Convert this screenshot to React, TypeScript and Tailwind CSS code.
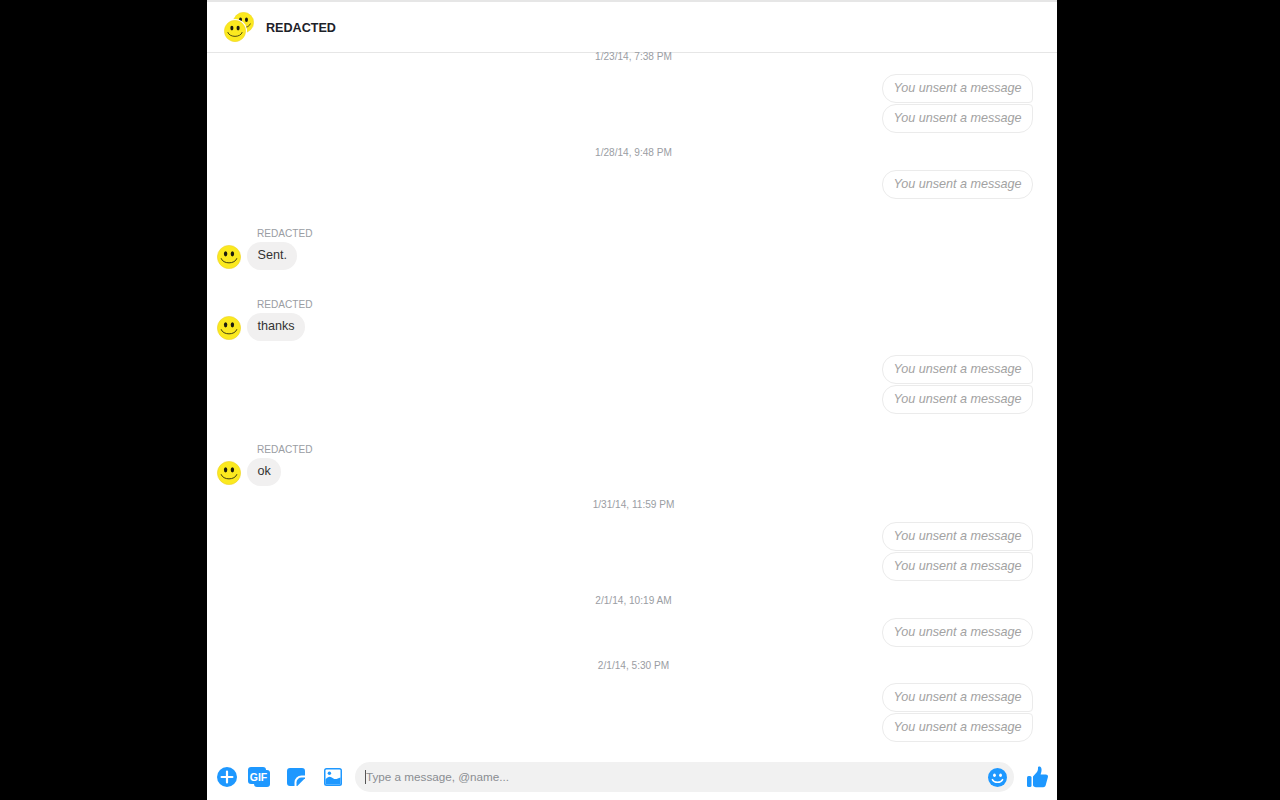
import React from 'react';

const Smiley = ({ className = '' }: { className?: string }) => (
  <svg viewBox="0 0 24 24" className={className}>
    <circle cx="12" cy="12" r="11.6" fill="#fbe91f" stroke="#ecd22a" strokeWidth="0.6" />
    <ellipse cx="8.6" cy="8.8" rx="1.7" ry="2.6" fill="#1c1c10" />
    <ellipse cx="15.4" cy="8.8" rx="1.7" ry="2.6" fill="#1c1c10" />
    <path d="M4.2 13.6 C6 19.4 18 19.4 19.8 13.6" fill="none" stroke="#2a2a10" strokeWidth="0.9" strokeLinecap="round" />
  </svg>
);

const Stamp = ({ text, className = '' }: { text: string; className?: string }) => (
  <div className={`h-[12px] pl-[3px] text-center text-[10.1px] leading-[14px] text-[#9a9da3] ${className}`}>{text}</div>
);

const Unsent = ({ className = '' }: { className?: string }) => (
  <div className={`flex justify-end pr-[24px] ${className}`}>
    <div className="h-[29px] w-[151px] rounded-[14px] border border-[#ebebeb] text-center text-[12.6px] italic leading-[27px] text-[#a2a2a2]">
      You unsent a message
    </div>
  </div>
);

const UnsentPair = ({ className = '' }: { className?: string }) => (
  <div className={`flex flex-col gap-px pr-[24px] items-end ${className}`}>
    <div className="h-[29px] w-[151px] rounded-[14px] rounded-br-[4px] border border-[#ebebeb] text-center text-[12.6px] italic leading-[27px] text-[#a2a2a2]">
      You unsent a message
    </div>
    <div className="h-[29px] w-[151px] rounded-[14px] rounded-tr-[4px] border border-[#ebebeb] text-center text-[12.6px] italic leading-[27px] text-[#a2a2a2]">
      You unsent a message
    </div>
  </div>
);

const Incoming = ({ text, className = '' }: { text: string; className?: string }) => (
  <div className={`pl-[10px] ${className}`}>
    <div className="ml-[40px] h-[12px] text-[10.1px] leading-[13px] text-[#9a9da3]">REDACTED</div>
    <div className="mt-[3px] flex items-end gap-[6px]">
      <Smiley className="mb-px h-[24px] w-[24px]" />
      <div className="h-[28px] rounded-[14px] bg-[#f1f0f0] pl-[10.5px] pr-[10px] text-[12.6px] leading-[27px] text-[#333333]">{text}</div>
    </div>
  </div>
);

export default function App() {
  return (
    <div className="flex h-screen justify-start overflow-hidden bg-black pl-[207px] font-['Liberation_Sans',Arial,sans-serif]">
      <div className="flex h-full w-[850px] flex-col bg-white">
        {/* Header */}
        <div className="flex h-[53px] shrink-0 items-center border-t-2 border-b border-t-[#e6e6e6] border-b-[#e6e6e6] pl-[17px]">
          <div className="relative h-[34px] w-[30px]">
            <Smiley className="absolute left-[9px] top-[2px] h-[21px] w-[21px]" />
            <div className="absolute -left-px top-[9px] rounded-full bg-white p-px">
              <Smiley className="h-[22px] w-[22px]" />
            </div>
          </div>
          <span className="ml-[12px] pt-[2px] text-[12.6px] font-bold text-[#1d2129]">REDACTED</span>
        </div>

        {/* Messages */}
        <div className="-mt-[3px] min-h-0 flex-1 overflow-hidden">
          <Stamp text="1/23/14, 7:38 PM" />
          <UnsentPair className="mt-[12px]" />
          <Stamp text="1/28/14, 9:48 PM" className="mt-[13px]" />
          <Unsent className="mt-[12px]" />
          <Incoming text="Sent." className="mt-[28px]" />
          <Incoming text="thanks" className="mt-[28px]" />
          <UnsentPair className="mt-[14px]" />
          <Incoming text="ok" className="mt-[29px]" />
          <Stamp text="1/31/14, 11:59 PM" className="mt-[12px]" />
          <UnsentPair className="mt-[12px]" />
          <Stamp text="2/1/14, 10:19 AM" className="mt-[13px]" />
          <Unsent className="mt-[12px]" />
          <Stamp text="2/1/14, 5:30 PM" className="mt-[12px]" />
          <UnsentPair className="mt-[12px]" />
        </div>

        {/* Composer */}
        <div className="flex h-[48px] shrink-0 items-start pl-[10px] pt-[10px]">
          <div className="flex h-[30px] items-center">
            <svg viewBox="0 0 20 20" className="h-[20px] w-[20px]">
              <circle cx="10" cy="10" r="10" fill="#1e98ff" />
              <path d="M10 4.6v10.8M4.6 10h10.8" stroke="#fff" strokeWidth="2.2" strokeLinecap="round" />
            </svg>
            <svg viewBox="0 0 22 20" className="ml-[11px] h-[20px] w-[22px]">
              <rect x="0" y="0" width="18" height="17" rx="3" fill="#1e98ff" />
              <rect x="6" y="3" width="16" height="17" rx="3" fill="#1e98ff" />
              <text x="10.5" y="14" textAnchor="middle" fontSize="10.5" fontWeight="700" fill="#fff" fontFamily="Liberation Sans, sans-serif">GIF</text>
            </svg>
            <svg viewBox="0 0 18 18" className="ml-[17px] h-[18px] w-[18px]">
              <path d="M3 0h12a3 3 0 0 1 3 3v4.5h-3.5a7 7 0 0 0-7 7V18H3a3 3 0 0 1-3-3V3a3 3 0 0 1 3-3z" fill="#1e98ff" />
              <path d="M18 9.5v.8L10.3 18H9.5v-3.5a5 5 0 0 1 5-5z" fill="#1e98ff" />
            </svg>
            <svg viewBox="0 0 18 18" className="ml-[19px] h-[18px] w-[18px]">
              <rect x="0" y="0" width="18" height="18" rx="2.5" fill="#1e98ff" />
              <rect x="1.5" y="1.5" width="15" height="15" rx="1" fill="#fff" />
              <circle cx="5.4" cy="5.2" r="1.7" fill="#1e98ff" />
              <path d="M1.5 11.5 C4 8 6.5 8 9 10.2 C11.5 12 13.5 10.5 16.5 9.5 V16.5 H1.5z" fill="#1e98ff" />
            </svg>
          </div>
          <div className="ml-[13px] flex h-[30px] flex-1 items-center rounded-[15px] bg-[#f1f1f1] pl-[10px] pr-[7px]">
            <span className="h-[14px] w-px bg-[#555555]" />
            <span className="flex-1 text-[11.7px] text-[#8a8d91]">Type a message, @name...</span>
            <svg viewBox="0 0 20 20" className="h-[19px] w-[19px]">
              <circle cx="10" cy="10" r="10" fill="#1e98ff" />
              <ellipse cx="6.8" cy="7.6" rx="1.5" ry="1.8" fill="#fff" />
              <ellipse cx="13.2" cy="7.6" rx="1.5" ry="1.8" fill="#fff" />
              <path d="M4.6 12.2 C6.5 16 13.5 16 15.4 12.2" fill="none" stroke="#fff" strokeWidth="1.6" strokeLinecap="round" />
            </svg>
          </div>
          <div className="flex h-[30px] w-[43px] items-center justify-end pr-[9px]">
            <svg viewBox="0 0 21 22" className="h-[22px] w-[21px]">
              <rect x="0" y="10" width="4.5" height="11" rx="1.5" fill="#1e98ff" />
              <path d="M6 10.5 L10 6 C11 4.6 11 3 11 1.6 C11 0.4 13.8 -0.2 14.4 2.6 C14.9 5 14 7 13.6 8.5 H18.8 C20.6 8.5 21.4 10 20.8 11.5 L18.6 19.6 C18.2 20.7 17.4 21.2 16.2 21.2 H9 C7.4 21.2 6 20.4 6 19z" fill="#1e98ff" />
            </svg>
          </div>
        </div>
      </div>
    </div>
  );
}
